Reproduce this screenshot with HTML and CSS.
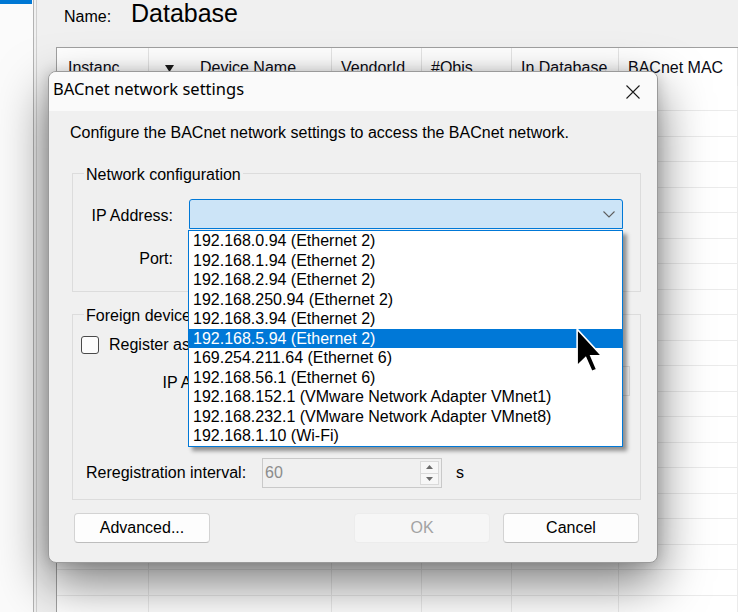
FILE: index.html
```html
<!DOCTYPE html>
<html>
<head>
<meta charset="utf-8">
<title>BACnet network settings</title>
<link rel="stylesheet" href="styles.css">
</head>
<body>
<div class="app">
  <aside class="sidebar"><div class="sidebar-sel"></div></aside>
  <main class="main">
    <div class="name-row">
      <span class="name-label">Name:</span>
      <span class="name-value">Database</span>
    </div>
    <div class="list">
      <div class="list-head">
        <div class="th th-first">Instanc</div>
        <div class="th th-sort">
          <svg class="sort-arrow" width="9" height="7" viewBox="0 0 9 7"><polygon points="0,0 9,0 4.5,7" fill="#1a1a1a"/></svg>
          <span>Device Name</span>
        </div>
        <div class="th">VendorId</div>
        <div class="th">#Objs</div>
        <div class="th">In Database</div>
        <div class="th">BACnet MAC</div>
      </div>
      <div class="list-body">
        <div class="col"></div>
        <div class="col"></div>
        <div class="col"></div>
        <div class="col"></div>
        <div class="col"></div>
        <div class="col"></div>
      </div>
    </div>
  </main>
</div>

<div class="dialog">
  <div class="titlebar">
    <span class="title">BACnet network settings</span>
    <div class="close">
      <svg width="14" height="14" viewBox="0 0 14 14"><path d="M0.5 0.5 L13.5 13.5 M13.5 0.5 L0.5 13.5" stroke="#1b1b1b" stroke-width="1.1" fill="none"/></svg>
    </div>
  </div>
  <div class="dlg-body">
    <p class="intro">Configure the BACnet network settings to access the BACnet network.</p>

    <fieldset class="group group-net">
      <legend>Network configuration</legend>
      <div class="field-row first-row">
        <label class="field-label">IP Address:</label>
        <div class="combo">
          <svg class="chev" width="12" height="7" viewBox="0 0 12 7"><path d="M0.5 0.5 L6 6 L11.5 0.5" stroke="#5f5f5f" stroke-width="1.1" fill="none"/></svg>
        </div>
      </div>
      <div class="field-row port-row">
        <label class="field-label">Port:</label>
        <div class="textbox port-box"></div>
      </div>
    </fieldset>

    <fieldset class="group group-foreign">
      <legend>Foreign device registration</legend>
      <label class="check-row"><span class="checkbox"></span><span>Register as foreign device</span></label>
      <div class="field-row fd-row">
        <label class="field-label fd-label">IP Address:</label>
        <div class="textbox disabled fd-ip-box"></div>
      </div>
      <div class="rereg-row">
        <span class="rereg-label">Reregistration interval:</span>
        <div class="spin">
          <span class="spin-val">60</span>
          <div class="spin-btns">
            <span class="spin-btn"><svg width="7" height="4" viewBox="0 0 7 4"><polygon points="0,4 7,4 3.5,0" fill="#6b6b6b"/></svg></span>
            <span class="spin-btn"><svg width="7" height="4" viewBox="0 0 7 4"><polygon points="0,0 7,0 3.5,4" fill="#6b6b6b"/></svg></span>
          </div>
        </div>
        <span class="unit">s</span>
      </div>
    </fieldset>

    <div class="buttons">
      <button class="btn">Advanced...</button>
      <span class="spacer"></span>
      <button class="btn" disabled>OK</button>
      <button class="btn">Cancel</button>
    </div>
  </div>
</div>

<ul class="dropdown">
  <li>192.168.0.94 (Ethernet 2)</li>
  <li>192.168.1.94 (Ethernet 2)</li>
  <li>192.168.2.94 (Ethernet 2)</li>
  <li>192.168.250.94 (Ethernet 2)</li>
  <li>192.168.3.94 (Ethernet 2)</li>
  <li class="selected">192.168.5.94 (Ethernet 2)</li>
  <li>169.254.211.64 (Ethernet 6)</li>
  <li>192.168.56.1 (Ethernet 6)</li>
  <li>192.168.152.1 (VMware Network Adapter VMnet1)</li>
  <li>192.168.232.1 (VMware Network Adapter VMnet8)</li>
  <li>192.168.1.10 (Wi-Fi)</li>
</ul>

<svg class="cursor" width="27" height="45" viewBox="0 0 12 20">
  <polygon points="0.5,0.5 0.5,16.8 4.3,13.2 7,19.3 9.2,18.4 6.6,12.4 11.5,12.4" fill="#000" stroke="#fff" stroke-width="0.7" stroke-linejoin="miter"/>
</svg>
</body>
</html>
```

FILE: styles.css
```css
* { box-sizing: border-box; }

html, body {
  margin: 0;
  width: 738px;
  height: 612px;
  overflow: hidden;
}

body {
  position: relative;
  font-family: "Liberation Sans", Arial, sans-serif;
  font-size: 16px;
  color: #000;
  background: #f0f0f0;
}

/* ---------- background application ---------- */
.app {
  display: flex;
  height: 612px;
}

.sidebar {
  width: 34px;
  background: #fbfbfb;
  border-right: 1px solid #b3b3b3;
}

.sidebar-sel {
  width: 32px;
  height: 4px;
  background: #0078d4;
}

.main {
  flex: 1;
  margin-left: 2px;
  border-left: 1px solid #cfcfcf;
  background: #f0f0f0;
  display: flex;
  flex-direction: column;
  min-width: 0;
}

.name-row {
  height: 47px;
  display: flex;
  align-items: flex-start;
  padding-left: 27px;
}

.name-label {
  margin-top: 8px;
  line-height: 18px;
  font-size: 16px;
  width: 67px;
}

.name-value {
  margin-top: 0;
  font-size: 25px;
  line-height: 26px;
}

.list {
  flex: 1;
  margin-left: 19px;
  border-top: 1px solid #a0a0a0;
  border-left: 1px solid #a0a0a0;
  background: #fff;
  display: flex;
  flex-direction: column;
}

.list-head,
.list-body {
  display: grid;
  grid-template-columns: 92px 183px 90px 90px 107px 1fr;
}

.list-head {
  height: 38px;
}

.th {
  border-right: 1px solid #e5e5e5;
  padding: 1px 0 0 9px;
  line-height: 37px;
  white-space: nowrap;
  overflow: hidden;
  color: #0a0a14;
}

.th-first { padding-left: 11px; }

.th-sort {
  display: flex;
  align-items: center;
  padding-left: 16px;
}

.sort-arrow { margin: 2px 26px 0 0; }

.list-body { flex: 1; }

.col {
  border-right: 1px solid #ebebeb;
  background: repeating-linear-gradient(to bottom, transparent 0, transparent 24.5px, #ebebeb 24.5px, #ebebeb 25.5px);
}

/* ---------- dialog ---------- */
.dialog {
  position: absolute;
  left: 48px;
  top: 71px;
  width: 610px;
  height: 492px;
  border: 1px solid #9a9a9a;
  border-radius: 8px;
  background: #f0f0f0;
  overflow: hidden;
  box-shadow: 0 20px 50px rgba(0, 0, 0, 0.52), 0 0 14px rgba(0, 0, 0, 0.16);
}

.titlebar {
  height: 39px;
  background: #fafafa;
  display: flex;
  align-items: flex-start;
  justify-content: space-between;
}

.title {
  font-family: "Noto Sans", "Open Sans", sans-serif;
  font-size: 16.5px;
  line-height: 22px;
  padding: 6px 0 0 4px;
  color: #000;
}

.close {
  width: 48px;
  height: 39px;
  display: flex;
  align-items: center;
  justify-content: center;
  padding-top: 1px;
}

.dlg-body {
  padding: 12px 16px 0 23px;
}

.intro {
  margin: 0 0 0 -2px;
  line-height: 20px;
  white-space: nowrap;
}

.group {
  margin: 0;
  padding: 0 0 19px 0;
  border: 1px solid #dcdcdc;
  width: 569px;
  min-width: 0;
}

.group legend {
  margin-left: 11px;
  padding: 4px 2px 0 2px;
  line-height: 20px;
}

.group-net { margin-top: 18px; }
.group-foreign { margin-top: 10px; padding-bottom: 11px; }

.field-row {
  display: flex;
  align-items: flex-start;
  height: 30px;
}

.first-row { margin-top: 14px; }
.port-row { margin-top: 13px; }

.field-label {
  width: 100px;
  margin-right: 16px;
  text-align: right;
  line-height: 30px;
  padding-top: 2px;
  white-space: nowrap;
}

.combo {
  width: 434px;
  height: 30px;
  background: #cce4f7;
  border: 1px solid #0078d7;
  border-radius: 3px 3px 0 0;
  display: flex;
  align-items: center;
  justify-content: flex-end;
  padding-right: 7px;
}

.chev { margin-top: 1px; }

.textbox {
  height: 30px;
  background: #fff;
  border: 1px solid #c8c8c8;
  line-height: 28px;
  padding-left: 3px;
}

.textbox.disabled { background: #f0f0f0; border-color: #d5d5d5; }

.port-box { width: 120px; }

.check-row {
  display: flex;
  align-items: center;
  height: 20px;
  line-height: 20px;
  margin: 9px 0 0 8px;
}

.checkbox {
  width: 18px;
  height: 18px;
  border: 1px solid #4a4a4a;
  border-radius: 3px;
  background: #fcfcfc;
  margin-right: 10px;
}

.fd-row { margin-top: 11px; }

.fd-label {
  width: 171px;
  margin-right: 18px;
}

.fd-ip-box { width: 368px; }

.rereg-row {
  display: flex;
  align-items: flex-start;
  height: 30px;
  margin-top: 62px;
}

.rereg-label {
  width: 189px;
  padding-left: 13px;
  line-height: 30px;
  white-space: nowrap;
}

.spin {
  width: 180px;
  height: 30px;
  border: 1px solid #c9c9c9;
  background: #f0f0f0;
  display: flex;
  align-items: stretch;
  justify-content: space-between;
}

.spin-val {
  color: #8c8c8c;
  line-height: 28px;
  padding-left: 2px;
}

.spin-btns {
  width: 19px;
  margin: 2px 2px 2px 0;
  display: flex;
  flex-direction: column;
  border: 1px solid #dadada;
  background: #f7f7f7;
}

.spin-btn {
  flex: 1;
  display: flex;
  align-items: center;
  justify-content: center;
}

.spin-btn + .spin-btn { border-top: 1px solid #dadada; }

.unit {
  line-height: 30px;
  margin-left: 14px;
}

.buttons {
  display: flex;
  margin: 13px 2px 0 2px;
  gap: 13px;
}

.spacer { flex: 1; }

.btn {
  width: 136px;
  height: 30px;
  font-family: "Liberation Sans", Arial, sans-serif;
  font-size: 16px;
  color: #000;
  background: #fdfdfd;
  border: 1px solid #d3d3d3;
  border-bottom-color: #bdbdbd;
  border-radius: 4px;
  padding: 0;
}

.btn:disabled {
  background: #f6f6f6;
  border-color: #ececec;
  color: #a3a3a3;
}

/* ---------- open combo dropdown ---------- */
.dropdown {
  position: absolute;
  left: 188px;
  top: 230px;
  width: 435px;
  height: 217px;
  margin: 0;
  padding: 0;
  list-style: none;
  background: #fff;
  border: 1px solid #0078d7;
  box-shadow: 4px 4px 4px rgba(0, 0, 0, 0.4);
}

.dropdown li {
  height: 19.5px;
  line-height: 19.5px;
  padding-left: 4px;
  white-space: nowrap;
}

.dropdown li.selected {
  background: #0078d7;
  color: #fff;
}

.cursor {
  position: absolute;
  left: 576px;
  top: 328px;
}
```
